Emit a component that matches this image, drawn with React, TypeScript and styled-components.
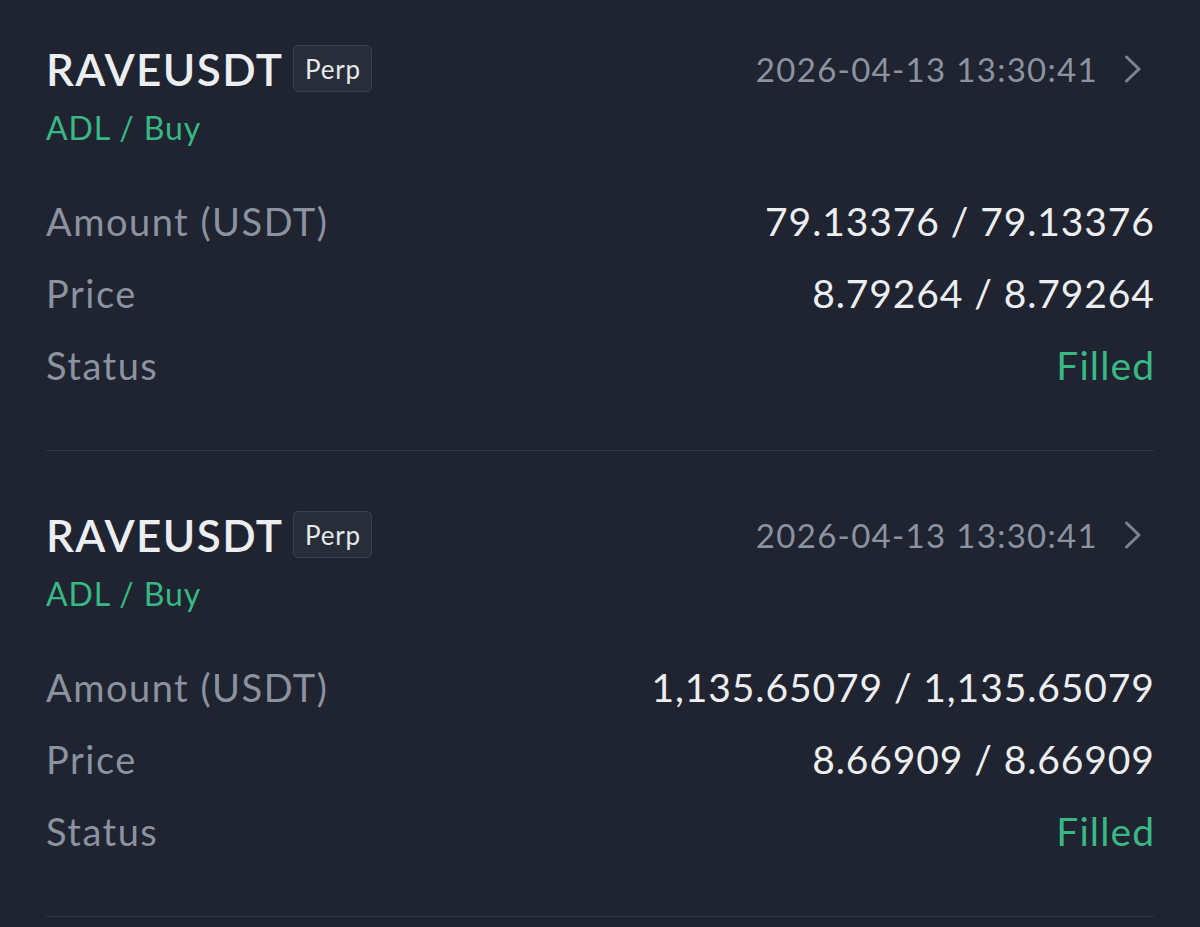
import React from "react";
import styled, { createGlobalStyle } from "styled-components";

const Global = createGlobalStyle`
  html, body { margin: 0; padding: 0; background: #1f2430; }
  body { font-family: Lato, "Open Sans", sans-serif; -webkit-font-smoothing: antialiased; }
`;

const List = styled.div`
  padding: 45px 46px 0 46px;
  display: flex;
  flex-direction: column;
`;

const Card = styled.section`
  display: flex;
  flex-direction: column;
  border-bottom: 1px solid #303643;
  padding-bottom: 49px;
  margin-bottom: 60px;

  &:last-child {
    margin-bottom: 0;
  }
`;

const Header = styled.div`
  display: flex;
  align-items: center;
  justify-content: space-between;
  height: 47px;
`;

const TitleGroup = styled.div`
  display: flex;
  align-items: center;
  gap: 10px;
`;

const Symbol = styled.span`
  font-size: 44px;
  font-weight: 600;
  color: #eceef1;
  letter-spacing: 1.4px;
  line-height: normal;
`;

const Badge = styled.span`
  display: inline-flex;
  align-items: center;
  justify-content: center;
  height: 47px;
  width: 79px;
  box-sizing: border-box;
  border: 1px solid #3a404c;
  border-radius: 5px;
  background: #272d39;
  color: #e6e8eb;
  font-size: 26px;
  letter-spacing: 0.8px;
`;

const Meta = styled.div`
  display: flex;
  align-items: center;
  gap: 26px;
  color: #8c93a0;
  font-size: 33px;
  letter-spacing: 1.3px;
  line-height: normal;
`;

const Sub = styled.div`
  color: #38b884;
  font-size: 32px;
  line-height: 40px;
  letter-spacing: 0.9px;
  margin-top: 16px;
`;

const Rows = styled.div`
  display: flex;
  flex-direction: column;
  margin-top: 37px;
`;

const Row = styled.div`
  display: flex;
  justify-content: space-between;
  align-items: baseline;
  height: 72px;
  line-height: 72px;
`;

const Label = styled.span`
  color: #8b92a0;
  font-size: 38px;
  letter-spacing: 1.5px;
`;

const Value = styled.span<{ $green?: boolean }>`
  color: ${(p) => (p.$green ? "#38b884" : "#eceef1")};
  font-size: 39px;
  letter-spacing: ${(p) => (p.$green ? "1.1px" : "0.9px")};
  margin-right: ${(p) => (p.$green ? "-1.1px" : "-0.9px")};
`;

const Chevron = () => (
  <svg width="30" height="28" viewBox="0 0 30 28" fill="none">
    <path d="M2.5 2 L15 14 L2.5 26" stroke="#7d8491" strokeWidth="3" strokeLinecap="round" strokeLinejoin="round" />
  </svg>
);

type Order = { amount: string; price: string };
const orders: Order[] = [
  { amount: "79.13376 / 79.13376", price: "8.79264 / 8.79264" },
  { amount: "1,135.65079 / 1,135.65079", price: "8.66909 / 8.66909" },
];

export default function App() {
  return (
    <>
      <Global />
      <List>
        {orders.map((o, i) => (
          <Card key={i}>
            <Header>
              <TitleGroup>
                <Symbol>RAVEUSDT</Symbol>
                <Badge>Perp</Badge>
              </TitleGroup>
              <Meta>
                <span>2026-04-13 13:30:41</span>
                <Chevron />
              </Meta>
            </Header>
            <Sub>ADL / Buy</Sub>
            <Rows>
              <Row>
                <Label>Amount (USDT)</Label>
                <Value>{o.amount}</Value>
              </Row>
              <Row>
                <Label>Price</Label>
                <Value>{o.price}</Value>
              </Row>
              <Row>
                <Label>Status</Label>
                <Value $green>Filled</Value>
              </Row>
            </Rows>
          </Card>
        ))}
      </List>
    </>
  );
}
